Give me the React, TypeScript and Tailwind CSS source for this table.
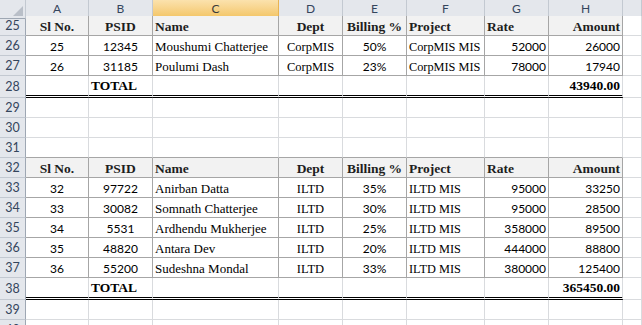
import React from "react";

type Align = "left" | "center" | "right";

const COLS = "grid grid-cols-[26px_63px_64px_126px_64px_64px_78px_64px_74px_1fr]";
const SERIF = "font-['Liberation_Serif',serif]";
const SANS = "font-['Lato',sans-serif]";

const alignCls: Record<Align, string> = {
    left: "justify-start pl-[2px]",
    center: "justify-center",
    right: "justify-end pr-[2px]",
};

const heads: [string, Align][] = [
    ["Sl No.", "center"],
    ["PSID", "center"],
    ["Name", "left"],
    ["Dept", "center"],
    ["Billing %", "center"],
    ["Project", "left"],
    ["Rate", "left"],
    ["Amount", "right"],
];

const dataAlign: Align[] = ["center", "center", "left", "center", "center", "left", "right", "right"];
// per column font for the body cells
const dataFont = [
    `text-[12px] ${SANS}`,
    `text-[12px] ${SANS}`,
    `text-[13px] ${SERIF}`,
    `text-[12.5px] ${SERIF}`,
    `text-[12px] ${SANS}`,
    `text-[12.3px] ${SERIF}`,
    `text-[12px] ${SANS}`,
    `text-[12px] ${SANS}`,
];

const table1 = [
    ["25", "12345", "Moushumi Chatterjee", "CorpMIS", "50%", "CorpMIS MIS", "52000", "26000"],
    ["26", "31185", "Poulumi Dash", "CorpMIS", "23%", "CorpMIS MIS", "78000", "17940"],
];

const table2 = [
    ["32", "97722", "Anirban Datta", "ILTD", "35%", "ILTD MIS", "95000", "33250"],
    ["33", "30082", "Somnath Chatterjee", "ILTD", "30%", "ILTD MIS", "95000", "28500"],
    ["34", "5531", "Ardhendu Mukherjee", "ILTD", "25%", "ILTD MIS", "358000", "89500"],
    ["35", "48820", "Antara Dev", "ILTD", "20%", "ILTD MIS", "444000", "88800"],
    ["36", "55200", "Sudeshna Mondal", "ILTD", "33%", "ILTD MIS", "380000", "125400"],
];

const CELL = "flex items-center whitespace-nowrap overflow-hidden";
const TBL = "border-r border-b border-r-[#a6a6a6] border-b-[#a6a6a6]";
const GRID = "border-r border-b border-r-[#d9dbde] border-b-[#d9dbde]";

function RowNum({ n }: { n: number }) {
    return (
        <div className={`${CELL} justify-center bg-[#e4e7ec] border-r border-b border-r-[#9ea7b3] border-b-[#c3c9d1] text-[12.5px] text-[#34455c] pt-[2px] ${SANS}`}>
            {n}
        </div>
    );
}

// blank cell at the right edge (column I)
function Spare() {
    return <div className={`bg-white ${GRID}`} />;
}

function HeaderRow({ n }: { n: number }) {
    return (
        <div className={`${COLS} h-5`}>
            <RowNum n={n} />
            {heads.map(([label, a]) => (
                <div
                    key={label}
                    className={`${CELL} pt-[3px] bg-[#f2f2f2] ${TBL} text-[13.5px] font-bold text-[#1e1e1e] ${alignCls[a]} ${SERIF}`}
                >
                    {label}
                </div>
            ))}
            <Spare />
        </div>
    );
}

function DataRow({ n, vals }: { n: number; vals: string[] }) {
    return (
        <div className={`${COLS} h-5`}>
            <RowNum n={n} />
            {vals.map((v, i) => (
                <div key={i} className={`${CELL} pt-[3px] bg-white ${TBL} text-black ${dataFont[i]} ${alignCls[dataAlign[i]]}`}>
                    {v}
                </div>
            ))}
            <Spare />
        </div>
    );
}

function TotalRow({ n, total }: { n: number; total: string }) {
    return (
        <div className={`${COLS} h-[22px]`}>
            <RowNum n={n} />
            {Array.from({ length: 8 }).map((_, i) => (
                <div
                    key={i}
                    className={`${CELL} pt-[1px] bg-white border-r border-r-[#d9dbde] border-b-[3px] border-double border-b-black text-[13.5px] font-bold text-black ${SERIF} ${
                        i === 7 ? alignCls.right : alignCls.left
                    }`}
                >
                    {i === 1 ? "TOTAL" : i === 7 ? total : ""}
                </div>
            ))}
            <Spare />
        </div>
    );
}

function EmptyRow({ n, tableBelow }: { n: number; tableBelow?: boolean }) {
    return (
        <div className={`${COLS} h-5`}>
            <RowNum n={n} />
            {Array.from({ length: 8 }).map((_, i) => (
                <div
                    key={i}
                    className={`bg-white border-r border-b border-r-[#d9dbde] ${tableBelow ? "border-b-[#a6a6a6]" : "border-b-[#d9dbde]"}`}
                />
            ))}
            <Spare />
        </div>
    );
}

export default function App() {
    const letters = ["A", "B", "C", "D", "E", "F", "G", "H", ""];
    return (
        <div className="w-[642px] h-[325px] overflow-hidden bg-white">
            <div className={`${COLS} h-4`}>
                <div className="relative bg-[#e4e7ec] border-r border-b border-r-[#c3c9d1] border-b-[#9ea7b3]">
                    <div className="absolute right-[2px] bottom-[2px] w-0 h-0 border-l-[10px] border-l-transparent border-b-[10px] border-b-[#b9bfc8]" />
                </div>
                {letters.map((l, i) => (
                    <div
                        key={i}
                        className={`flex items-center justify-center border-r border-b text-[12px] ${SANS} ${
                            l === "C"
                                ? "bg-linear-to-b from-[#fbe2ad] to-[#f3c462] border-r-[#e8b352] border-b-[#f0a43c] text-[#3a3a3a]"
                                : "bg-[#e4e7ec] border-r-[#c3c9d1] border-b-[#9ea7b3] text-[#34455c]"
                        }`}
                    >
                        {l}
                    </div>
                ))}
            </div>
            <HeaderRow n={25} />
            {table1.map((r, i) => (
                <DataRow key={r[0]} n={26 + i} vals={r} />
            ))}
            <TotalRow n={28} total="43940.00" />
            <EmptyRow n={29} />
            <EmptyRow n={30} />
            <EmptyRow n={31} tableBelow />
            <HeaderRow n={32} />
            {table2.map((r, i) => (
                <DataRow key={r[0]} n={33 + i} vals={r} />
            ))}
            <TotalRow n={38} total="365450.00" />
            <EmptyRow n={39} />
            <EmptyRow n={40} />
        </div>
    );
}
